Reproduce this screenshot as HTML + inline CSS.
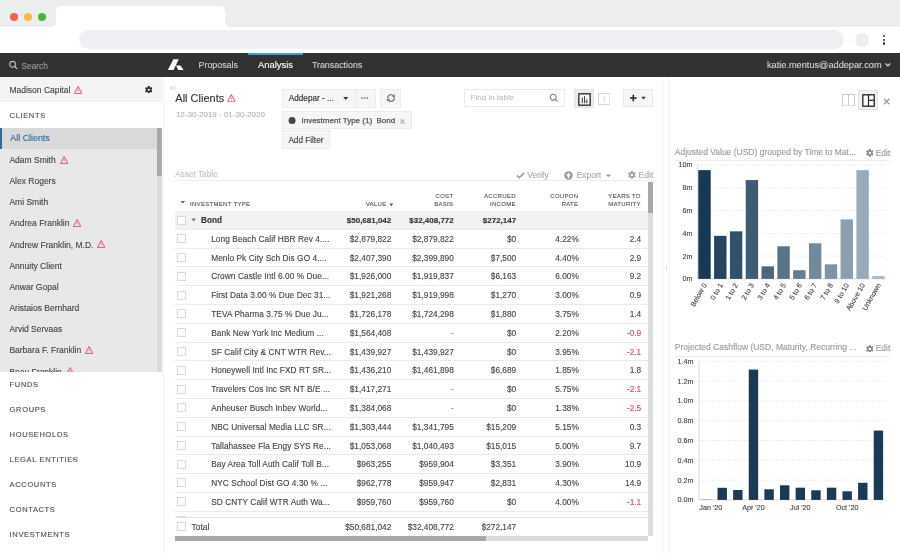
<!DOCTYPE html>
<html><head><meta charset="utf-8"><style>
html,body{margin:0;padding:0;width:900px;height:553px;overflow:hidden;background:#fff;}
body{position:relative;font-family:"Liberation Sans", sans-serif;}
div{position:absolute;}
.t{white-space:nowrap;-webkit-text-stroke-width:0.12px;}
#root{left:0;top:0;width:900px;height:553px;overflow:hidden;will-change:transform;background:#fff;}
svg{position:absolute;}
</style></head><body><div id="root">
<div style="left:0.00px;top:0.00px;width:900.00px;height:5.50px;background:#eceeed;"></div>
<div style="left:0.00px;top:0.00px;width:56.00px;height:27.00px;background:#eceeed;border-bottom-right-radius:5px;"></div>
<div style="left:225.00px;top:0.00px;width:675.00px;height:27.00px;background:#eceeed;border-bottom-left-radius:5px;"></div>
<div style="left:56.00px;top:5.00px;width:169.00px;height:7.00px;background:#eceeed;"></div>
<div style="left:56.00px;top:5.50px;width:169.00px;height:22.00px;background:#fff;border-radius:5px 5px 0 0;"></div>
<div style="left:9.90px;top:12.60px;width:8.20px;height:8.20px;background:#f95f57;border-radius:50%;"></div>
<div style="left:24.00px;top:12.60px;width:8.20px;height:8.20px;background:#f9bd3c;border-radius:50%;"></div>
<div style="left:38.10px;top:12.60px;width:8.20px;height:8.20px;background:#44b93c;border-radius:50%;"></div>
<div style="left:79.00px;top:30.20px;width:764.50px;height:19.10px;background:#eff0f3;border-radius:9.5px;"></div>
<div style="left:854.70px;top:32.50px;width:14.20px;height:14.20px;background:#eceef1;border-radius:50%;"></div>
<div style="left:883.30px;top:35.20px;width:2.20px;height:2.20px;background:#333;border-radius:50%;"></div>
<div style="left:883.30px;top:38.80px;width:2.20px;height:2.20px;background:#333;border-radius:50%;"></div>
<div style="left:883.30px;top:42.40px;width:2.20px;height:2.20px;background:#333;border-radius:50%;"></div>
<div style="left:0.00px;top:52.80px;width:900.00px;height:24.30px;background:#323232;"></div>
<div style="left:248.40px;top:52.80px;width:54.20px;height:1.80px;background:#3b9cec;"></div>
<svg style="position:absolute;left:8px;top:59px" width="12" height="12" viewBox="0 0 12 12"><circle cx="4.6" cy="5.3" r="2.9" fill="none" stroke="#bbb" stroke-width="1.1"/><line x1="6.8" y1="7.5" x2="8.8" y2="9.5" stroke="#bbb" stroke-width="1.2" stroke-linecap="round"/></svg>
<div class="t" style="top:61.77px;font-size:8.3px;line-height:8.3px;color:#9a9a9a;left:21.50px;">Search</div>
<svg style="position:absolute;left:0;top:0" width="200" height="80"><polygon points="167.9,70.1 173.3,59.2 178.7,59.2 173.6,70.1" fill="#fff"/><polygon points="176,65.5 180.4,65.5 183.6,70.1 178.2,70.1" fill="#fff"/></svg>
<div class="t" style="top:60.67px;font-size:8.9px;line-height:8.9px;color:#cfcfcf;left:198.50px;">Proposals</div>
<div class="t" style="top:60.24px;font-size:9.4px;line-height:9.4px;color:#ffffff;left:258.00px;">Analysis</div>
<div class="t" style="top:60.67px;font-size:8.9px;line-height:8.9px;color:#cfcfcf;left:311.90px;">Transactions</div>
<div class="t" style="top:60.51px;font-size:9.2px;line-height:9.2px;color:#d5d5d5;left:767.00px;">katie.mentus@addepar.com</div>
<svg style="position:absolute;left:884px;top:62px" width="8" height="6"><polyline points="1.5,1.5 3.9,4 6.3,1.5" fill="none" stroke="#ddd" stroke-width="1.1"/></svg>
<div style="left:0.00px;top:77.00px;width:162.00px;height:25.40px;background:#f4f4f4;"></div>
<div class="t" style="top:86.00px;font-size:8.5px;line-height:8.5px;color:#444;left:9.40px;">Madison Capital<svg style="position:static;display:inline-block;vertical-align:-1px;margin-top:-9px;margin-left:3.9px" width="8.20" height="8.20" viewBox="0 0 10 10"><path d="M5 0.7 L9.45 9.15 L0.55 9.15 Z" fill="none" stroke="#e46a80" stroke-width="1.28" stroke-linejoin="round"/><line x1="5" y1="3.9" x2="5" y2="6.3" stroke="#e46a80" stroke-width="0.95"/><circle cx="5" cy="7.5" r="0.5" fill="#e46a80"/></svg></div>
<svg style="position:absolute;left:144.50px;top:85.60px" width="7.60" height="7.60" viewBox="-10 -10 20 20"><g fill="#2a2a2a"><rect x="-2.6" y="-10" width="5.2" height="6" transform="rotate(0)"/><rect x="-2.6" y="-10" width="5.2" height="6" transform="rotate(60)"/><rect x="-2.6" y="-10" width="5.2" height="6" transform="rotate(120)"/><rect x="-2.6" y="-10" width="5.2" height="6" transform="rotate(180)"/><rect x="-2.6" y="-10" width="5.2" height="6" transform="rotate(240)"/><rect x="-2.6" y="-10" width="5.2" height="6" transform="rotate(300)"/><circle r="6.6"/></g><circle r="3" fill="#f4f4f4"/></svg>
<div style="left:0.00px;top:102.40px;width:162.00px;height:25.60px;background:#fff;"></div>
<div class="t" style="top:112.15px;font-size:7.5px;line-height:7.5px;color:#555;letter-spacing:0.65px;left:9.60px;-webkit-text-stroke:0.15px #555;">CLIENTS</div>
<div style="left:0.00px;top:128.00px;width:162.00px;height:244.00px;background:#e8e8e8;overflow:hidden;"></div>
<div style="left:0.00px;top:128.00px;width:157.00px;height:21.20px;background:#d9d9d9;"></div>
<div style="left:0.00px;top:128.00px;width:1.60px;height:21.20px;background:#2b6ba3;"></div>
<div style="left:157.20px;top:128.00px;width:5.00px;height:244.00px;background:#dcdcdc;"></div>
<div style="left:157.20px;top:128.00px;width:5.00px;height:47.80px;background:#a9a9a9;"></div>
<div class="t" style="top:134.42px;font-size:8.9px;line-height:8.9px;color:#2b6ba3;left:10.30px;">All Clients</div>
<div class="t" style="top:155.92px;font-size:8.5px;line-height:8.5px;color:#444;left:9.40px;">Adam Smith<svg style="position:static;display:inline-block;vertical-align:-1px;margin-top:-9px;margin-left:3.9px" width="8.20" height="8.20" viewBox="0 0 10 10"><path d="M5 0.7 L9.45 9.15 L0.55 9.15 Z" fill="none" stroke="#e46a80" stroke-width="1.28" stroke-linejoin="round"/><line x1="5" y1="3.9" x2="5" y2="6.3" stroke="#e46a80" stroke-width="0.95"/><circle cx="5" cy="7.5" r="0.5" fill="#e46a80"/></svg></div>
<div class="t" style="top:177.09px;font-size:8.5px;line-height:8.5px;color:#444;left:9.40px;">Alex Rogers</div>
<div class="t" style="top:198.26px;font-size:8.5px;line-height:8.5px;color:#444;left:9.40px;">Ami Smith</div>
<div class="t" style="top:219.43px;font-size:8.5px;line-height:8.5px;color:#444;left:9.40px;">Andrea Franklin<svg style="position:static;display:inline-block;vertical-align:-1px;margin-top:-9px;margin-left:3.9px" width="8.20" height="8.20" viewBox="0 0 10 10"><path d="M5 0.7 L9.45 9.15 L0.55 9.15 Z" fill="none" stroke="#e46a80" stroke-width="1.28" stroke-linejoin="round"/><line x1="5" y1="3.9" x2="5" y2="6.3" stroke="#e46a80" stroke-width="0.95"/><circle cx="5" cy="7.5" r="0.5" fill="#e46a80"/></svg></div>
<div class="t" style="top:240.60px;font-size:8.5px;line-height:8.5px;color:#444;left:9.40px;">Andrew Franklin, M.D.<svg style="position:static;display:inline-block;vertical-align:-1px;margin-top:-9px;margin-left:3.9px" width="8.20" height="8.20" viewBox="0 0 10 10"><path d="M5 0.7 L9.45 9.15 L0.55 9.15 Z" fill="none" stroke="#e46a80" stroke-width="1.28" stroke-linejoin="round"/><line x1="5" y1="3.9" x2="5" y2="6.3" stroke="#e46a80" stroke-width="0.95"/><circle cx="5" cy="7.5" r="0.5" fill="#e46a80"/></svg></div>
<div class="t" style="top:261.77px;font-size:8.5px;line-height:8.5px;color:#444;left:9.40px;">Annuity Client</div>
<div class="t" style="top:282.94px;font-size:8.5px;line-height:8.5px;color:#444;left:9.40px;">Anwar Gopal</div>
<div class="t" style="top:304.11px;font-size:8.5px;line-height:8.5px;color:#444;left:9.40px;">Aristaios Bernhard</div>
<div class="t" style="top:325.28px;font-size:8.5px;line-height:8.5px;color:#444;left:9.40px;">Arvid Servaas</div>
<div class="t" style="top:346.45px;font-size:8.5px;line-height:8.5px;color:#444;left:9.40px;">Barbara F. Franklin<svg style="position:static;display:inline-block;vertical-align:-1px;margin-top:-9px;margin-left:3.9px" width="8.20" height="8.20" viewBox="0 0 10 10"><path d="M5 0.7 L9.45 9.15 L0.55 9.15 Z" fill="none" stroke="#e46a80" stroke-width="1.28" stroke-linejoin="round"/><line x1="5" y1="3.9" x2="5" y2="6.3" stroke="#e46a80" stroke-width="0.95"/><circle cx="5" cy="7.5" r="0.5" fill="#e46a80"/></svg></div>
<div class="t" style="top:367.62px;font-size:8.5px;line-height:8.5px;color:#444;left:9.40px;">Beau Franklin<svg style="position:static;display:inline-block;vertical-align:-1px;margin-top:-9px;margin-left:3.9px" width="8.20" height="8.20" viewBox="0 0 10 10"><path d="M5 0.7 L9.45 9.15 L0.55 9.15 Z" fill="none" stroke="#e46a80" stroke-width="1.28" stroke-linejoin="round"/><line x1="5" y1="3.9" x2="5" y2="6.3" stroke="#e46a80" stroke-width="0.95"/><circle cx="5" cy="7.5" r="0.5" fill="#e46a80"/></svg></div>
<div style="left:0.00px;top:372.00px;width:162.00px;height:181.00px;background:#fff;"></div>
<div class="t" style="top:380.95px;font-size:7.5px;line-height:7.5px;color:#555;letter-spacing:0.65px;left:9.60px;-webkit-text-stroke:0.15px #555;">FUNDS</div>
<div class="t" style="top:406.00px;font-size:7.5px;line-height:7.5px;color:#555;letter-spacing:0.65px;left:9.60px;-webkit-text-stroke:0.15px #555;">GROUPS</div>
<div class="t" style="top:431.05px;font-size:7.5px;line-height:7.5px;color:#555;letter-spacing:0.65px;left:9.60px;-webkit-text-stroke:0.15px #555;">HOUSEHOLDS</div>
<div class="t" style="top:456.10px;font-size:7.5px;line-height:7.5px;color:#555;letter-spacing:0.65px;left:9.60px;-webkit-text-stroke:0.15px #555;">LEGAL ENTITIES</div>
<div class="t" style="top:481.15px;font-size:7.5px;line-height:7.5px;color:#555;letter-spacing:0.65px;left:9.60px;-webkit-text-stroke:0.15px #555;">ACCOUNTS</div>
<div class="t" style="top:506.20px;font-size:7.5px;line-height:7.5px;color:#555;letter-spacing:0.65px;left:9.60px;-webkit-text-stroke:0.15px #555;">CONTACTS</div>
<div class="t" style="top:531.25px;font-size:7.5px;line-height:7.5px;color:#555;letter-spacing:0.65px;left:9.60px;-webkit-text-stroke:0.15px #555;">INVESTMENTS</div>
<div style="left:162.50px;top:77.00px;width:0.80px;height:476.00px;background:#f3f3f3;"></div>
<svg style="position:absolute;left:168.5px;top:84.5px" width="8" height="6" viewBox="0 0 8 6"><polyline points="3.6,1 1.4,3 3.6,5" fill="none" stroke="#c4c4c4" stroke-width="0.9"/><polyline points="6.6,1 4.4,3 6.6,5" fill="none" stroke="#c4c4c4" stroke-width="0.9"/></svg>
<div class="t" style="top:93.39px;font-size:11px;line-height:11px;color:#333;left:175.30px;">All Clients</div>
<div style="left:226.90px;top:93.60px;line-height:0"><svg style="position:static;display:inline-block;display:block" width="8.60" height="8.60" viewBox="0 0 10 10"><path d="M5 0.7 L9.45 9.15 L0.55 9.15 Z" fill="none" stroke="#e46a80" stroke-width="1.22" stroke-linejoin="round"/><line x1="5" y1="3.9" x2="5" y2="6.3" stroke="#e46a80" stroke-width="0.95"/><circle cx="5" cy="7.5" r="0.5" fill="#e46a80"/></svg></div>
<div class="t" style="top:111.23px;font-size:8px;line-height:8px;color:#b5b5b5;left:175.90px;">12-30-2019 - 01-30-2020</div>
<div style="left:282.00px;top:89.00px;width:93.80px;height:18.50px;background:#f6f6f6;border:1px solid #ececec;box-sizing:border-box;"></div>
<div style="left:354.50px;top:89.00px;width:1.00px;height:18.50px;background:#e9e9e9;"></div>
<div class="t" style="top:94.76px;font-size:8.2px;line-height:8.2px;color:#3c3c3c;left:288.80px;-webkit-text-stroke:0.2px #3c3c3c;">Addepar - ...</div>
<svg style="position:absolute;left:342px;top:96px" width="8" height="5"><polygon points="1.2,1 6.2,1 3.7,4" fill="#333"/></svg>
<svg style="position:absolute;left:358px;top:95px" width="14" height="6"><circle cx="4.1" cy="3" r="0.85" fill="#666"/><circle cx="6.7" cy="3" r="0.85" fill="#666"/><circle cx="9.3" cy="3" r="0.85" fill="#666"/></svg>
<div style="left:380.20px;top:89.00px;width:20.60px;height:18.50px;background:#f6f6f6;border:1px solid #ececec;box-sizing:border-box;"></div>
<svg style="position:absolute;left:386px;top:92.8px" width="10" height="10" viewBox="0 0 10 10"><path d="M1.7 5.3 A3.3 3.3 0 0 1 7.6 3.0" fill="none" stroke="#808080" stroke-width="1.25"/><path d="M8.3 4.7 A3.3 3.3 0 0 1 2.4 7.0" fill="none" stroke="#777" stroke-width="1.25"/><polygon points="8.9,1.4 9.0,4.6 5.9,4.1" fill="#777"/><polygon points="1.1,8.6 1.0,5.4 4.1,5.9" fill="#777"/></svg>
<div style="left:281.60px;top:111.40px;width:130.30px;height:17.60px;background:#f6f6f6;border:1px solid #ebebeb;box-sizing:border-box;"></div>
<svg style="position:absolute;left:286px;top:114px" width="12" height="12"><circle cx="6.1" cy="6.4" r="3.5" fill="#444"/></svg>
<div class="t" style="top:116.53px;font-size:8px;line-height:8px;color:#555;left:301.50px;-webkit-text-stroke:0.25px #555;">Investment Type (1)</div>
<div class="t" style="top:116.53px;font-size:8px;line-height:8px;color:#555;left:376.40px;-webkit-text-stroke:0.25px #555;">Bond</div>
<svg style="position:absolute;left:399px;top:117.5px" width="7" height="7"><path d="M1.4 1.4 L5.6 5.6 M5.6 1.4 L1.4 5.6" stroke="#b0b0b0" stroke-width="1.2"/></svg>
<div style="left:281.60px;top:129.80px;width:48.20px;height:19.40px;background:#f6f6f6;border:1px solid #ebebeb;box-sizing:border-box;"></div>
<div class="t" style="top:136.66px;font-size:8.2px;line-height:8.2px;color:#444;left:288.40px;-webkit-text-stroke:0.15px #444;">Add Filter</div>
<div style="left:463.50px;top:89.20px;width:101.10px;height:17.90px;background:#fff;border:1px solid #ebebeb;box-sizing:border-box;"></div>
<div class="t" style="top:93.83px;font-size:8px;line-height:8px;color:#bdbdbd;left:470.60px;">Find in table</div>
<svg style="position:absolute;left:549px;top:92.5px" width="10" height="10" viewBox="0 0 10 10"><circle cx="4.2" cy="4.2" r="2.9" fill="none" stroke="#888" stroke-width="1.1"/><line x1="6.3" y1="6.3" x2="8.6" y2="8.6" stroke="#888" stroke-width="1.3"/></svg>
<div style="left:574.40px;top:88.90px;width:19.80px;height:19.60px;background:#ececec;border:1px solid #e2e2e2;box-sizing:border-box;"></div>
<svg style="position:absolute;left:578px;top:92.5px" width="13" height="13" viewBox="0 0 13 13"><rect x="0.8" y="0.8" width="11.4" height="11.4" fill="#f7f7f7" stroke="#333" stroke-width="1.4"/><rect x="3.8" y="4.6" width="1.1" height="5.6" fill="#444"/><rect x="6" y="3.2" width="1.1" height="7" fill="#444"/><rect x="8.2" y="6.6" width="1.1" height="3.6" fill="#444"/></svg>
<svg style="position:absolute;left:597.5px;top:92.8px" width="12.5" height="12" viewBox="0 0 12.5 12"><rect x="0.5" y="0.5" width="11.5" height="11" fill="#fff" stroke="#d4d4d4" stroke-width="1"/><line x1="6.2" y1="2.8" x2="6.2" y2="9.4" stroke="#ccc" stroke-width="0.8"/></svg>
<div style="left:623.30px;top:89.10px;width:29.90px;height:18.40px;background:#f6f6f6;border:1px solid #e8e8e8;box-sizing:border-box;"></div>
<svg style="position:absolute;left:629.2px;top:94px" width="18" height="8"><path d="M4.3 0.7 V7.3 M1.0 4 H7.6" stroke="#222" stroke-width="1.5"/><polygon points="12.3,2.8 16.7,2.8 14.5,5.4" fill="#333"/></svg>
<div class="t" style="top:170.27px;font-size:8.3px;line-height:8.3px;color:#c4c4c4;left:175.00px;">Asset Table</div>
<svg style="position:absolute;left:516px;top:172px" width="9" height="7"><polyline points="0.9,3.4 3.2,5.7 8.2,0.9" fill="none" stroke="#999" stroke-width="1.5"/></svg>
<div class="t" style="top:171.02px;font-size:8.6px;line-height:8.6px;color:#aaaaaa;left:527.20px;">Verify</div>
<svg style="position:absolute;left:564px;top:170.8px" width="9" height="9" viewBox="0 0 9 9"><circle cx="4.5" cy="4.5" r="4.2" fill="#999"/><polygon points="4.5,1.7 7.1,4.4 5.4,4.4 5.4,7.2 3.6,7.2 3.6,4.4 1.9,4.4" fill="#fff"/></svg>
<div class="t" style="top:171.02px;font-size:8.6px;line-height:8.6px;color:#aaaaaa;left:576.40px;">Export</div>
<svg style="position:absolute;left:605.3px;top:173.8px" width="7" height="4"><polygon points="0.4,0.6 6.4,0.6 3.4,3" fill="#999"/></svg>
<svg style="position:absolute;left:628.20px;top:170.80px" width="7.80" height="7.80" viewBox="-10 -10 20 20"><g fill="#a0a0a0"><rect x="-2.6" y="-10" width="5.2" height="6" transform="rotate(0)"/><rect x="-2.6" y="-10" width="5.2" height="6" transform="rotate(60)"/><rect x="-2.6" y="-10" width="5.2" height="6" transform="rotate(120)"/><rect x="-2.6" y="-10" width="5.2" height="6" transform="rotate(180)"/><rect x="-2.6" y="-10" width="5.2" height="6" transform="rotate(240)"/><rect x="-2.6" y="-10" width="5.2" height="6" transform="rotate(300)"/><circle r="6.6"/></g><circle r="3" fill="#fff"/></svg>
<div class="t" style="top:171.02px;font-size:8.6px;line-height:8.6px;color:#aaaaaa;left:638.60px;">Edit</div>
<div style="left:175.00px;top:180.20px;width:478.00px;height:0.90px;background:#ededed;"></div>
<svg style="position:absolute;left:179.5px;top:200px" width="6" height="5"><polygon points="0.6,1 5.2,1 2.9,3.6" fill="#666"/></svg>
<div class="t" style="top:201.32px;font-size:6px;line-height:6px;color:#555;letter-spacing:0.3px;left:190.00px;">INVESTMENT TYPE</div>
<div class="t" style="top:201.32px;font-size:6px;line-height:6px;color:#555;letter-spacing:0.3px;left:386.50px;transform:translateX(-100%);">VALUE</div>
<svg style="position:absolute;left:389px;top:202.6px" width="5" height="4"><polygon points="0.3,0.6 4.3,0.6 2.3,3.2" fill="#555"/></svg>
<div class="t" style="top:193.42px;font-size:6px;line-height:6px;color:#555;letter-spacing:0.3px;left:453.40px;transform:translateX(-100%);">COST</div>
<div class="t" style="top:201.32px;font-size:6px;line-height:6px;color:#555;letter-spacing:0.3px;left:453.40px;transform:translateX(-100%);">BASIS</div>
<div class="t" style="top:193.42px;font-size:6px;line-height:6px;color:#555;letter-spacing:0.3px;left:515.80px;transform:translateX(-100%);">ACCRUED</div>
<div class="t" style="top:201.32px;font-size:6px;line-height:6px;color:#555;letter-spacing:0.3px;left:515.80px;transform:translateX(-100%);">INCOME</div>
<div class="t" style="top:193.42px;font-size:6px;line-height:6px;color:#555;letter-spacing:0.3px;left:578.40px;transform:translateX(-100%);">COUPON</div>
<div class="t" style="top:201.32px;font-size:6px;line-height:6px;color:#555;letter-spacing:0.3px;left:578.40px;transform:translateX(-100%);">RATE</div>
<div class="t" style="top:193.42px;font-size:6px;line-height:6px;color:#555;letter-spacing:0.3px;left:640.80px;transform:translateX(-100%);">YEARS TO</div>
<div class="t" style="top:201.32px;font-size:6px;line-height:6px;color:#555;letter-spacing:0.3px;left:640.80px;transform:translateX(-100%);">MATURITY</div>
<div style="left:174.7px;top:210.6px;width:473.3px;height:306.8px;overflow:hidden">
<div style="left:0.00px;top:0.00px;width:473.30px;height:18.79px;background:#f2f2f2;"></div>
<div style="left:0.00px;top:18.29px;width:473.30px;height:0.80px;background:#ebebeb;"></div>
<div style="left:0.00px;top:37.08px;width:473.30px;height:0.80px;background:#ebebeb;"></div>
<div style="left:0.00px;top:55.87px;width:473.30px;height:0.80px;background:#ebebeb;"></div>
<div style="left:0.00px;top:74.66px;width:473.30px;height:0.80px;background:#ebebeb;"></div>
<div style="left:0.00px;top:93.45px;width:473.30px;height:0.80px;background:#ebebeb;"></div>
<div style="left:0.00px;top:112.24px;width:473.30px;height:0.80px;background:#ebebeb;"></div>
<div style="left:0.00px;top:131.03px;width:473.30px;height:0.80px;background:#ebebeb;"></div>
<div style="left:0.00px;top:149.82px;width:473.30px;height:0.80px;background:#ebebeb;"></div>
<div style="left:0.00px;top:168.61px;width:473.30px;height:0.80px;background:#ebebeb;"></div>
<div style="left:0.00px;top:187.40px;width:473.30px;height:0.80px;background:#ebebeb;"></div>
<div style="left:0.00px;top:206.19px;width:473.30px;height:0.80px;background:#ebebeb;"></div>
<div style="left:0.00px;top:224.98px;width:473.30px;height:0.80px;background:#ebebeb;"></div>
<div style="left:0.00px;top:243.77px;width:473.30px;height:0.80px;background:#ebebeb;"></div>
<div style="left:0.00px;top:262.56px;width:473.30px;height:0.80px;background:#ebebeb;"></div>
<div style="left:0.00px;top:281.35px;width:473.30px;height:0.80px;background:#ebebeb;"></div>
<div style="left:0.00px;top:300.14px;width:473.30px;height:0.80px;background:#ebebeb;"></div>
<div style="left:0.00px;top:318.93px;width:473.30px;height:0.80px;background:#ebebeb;"></div>
<div style="left:2.60px;top:5.40px;width:9.20px;height:9.00px;background:#fff;border:1px solid #d9d9d9;box-sizing:border-box;"></div>
<svg style="position:absolute;left:16.30px;top:7.70px" width="6" height="5"><polygon points="0.5,0.6 4.9,0.6 2.7,3.4" fill="#777"/></svg>
<div class="t" style="top:6.06px;font-size:8.2px;line-height:8.2px;color:#333;font-weight:700;left:26.30px;">Bond</div>
<div class="t" style="top:6.23px;font-size:8px;line-height:8px;color:#333;font-weight:700;left:216.60px;transform:translateX(-100%);">$50,681,042</div>
<div class="t" style="top:6.23px;font-size:8px;line-height:8px;color:#333;font-weight:700;left:279.10px;transform:translateX(-100%);">$32,408,772</div>
<div class="t" style="top:6.23px;font-size:8px;line-height:8px;color:#333;font-weight:700;left:341.50px;transform:translateX(-100%);">$272,147</div>
<div style="left:2.60px;top:23.59px;width:9.20px;height:9.00px;background:#fff;border:1px solid #d9d9d9;box-sizing:border-box;"></div>
<div class="t" style="left:36.50px;top:24.26px;font-size:8.3px;line-height:8.3px;color:#444;white-space:nowrap;letter-spacing:0.07px">Long Beach Calif HBR Rev 4....</div>
<div class="t" style="top:24.26px;font-size:8.3px;line-height:8.3px;color:#444;left:216.60px;transform:translateX(-100%);">$2,879,822</div>
<div class="t" style="top:24.26px;font-size:8.3px;line-height:8.3px;color:#444;left:279.10px;transform:translateX(-100%);">$2,879,822</div>
<div class="t" style="top:24.26px;font-size:8.3px;line-height:8.3px;color:#444;left:341.50px;transform:translateX(-100%);">$0</div>
<div class="t" style="top:24.26px;font-size:8.3px;line-height:8.3px;color:#444;left:404.10px;transform:translateX(-100%);">4.22%</div>
<div class="t" style="top:24.26px;font-size:8.3px;line-height:8.3px;color:#444;left:466.50px;transform:translateX(-100%);">2.4</div>
<div style="left:2.60px;top:42.38px;width:9.20px;height:9.00px;background:#fff;border:1px solid #d9d9d9;box-sizing:border-box;"></div>
<div class="t" style="left:36.50px;top:43.05px;font-size:8.3px;line-height:8.3px;color:#444;white-space:nowrap;letter-spacing:0.07px">Menlo Pk City Sch Dis GO 4....</div>
<div class="t" style="top:43.05px;font-size:8.3px;line-height:8.3px;color:#444;left:216.60px;transform:translateX(-100%);">$2,407,390</div>
<div class="t" style="top:43.05px;font-size:8.3px;line-height:8.3px;color:#444;left:279.10px;transform:translateX(-100%);">$2,399,890</div>
<div class="t" style="top:43.05px;font-size:8.3px;line-height:8.3px;color:#444;left:341.50px;transform:translateX(-100%);">$7,500</div>
<div class="t" style="top:43.05px;font-size:8.3px;line-height:8.3px;color:#444;left:404.10px;transform:translateX(-100%);">4.40%</div>
<div class="t" style="top:43.05px;font-size:8.3px;line-height:8.3px;color:#444;left:466.50px;transform:translateX(-100%);">2.9</div>
<div style="left:2.60px;top:61.17px;width:9.20px;height:9.00px;background:#fff;border:1px solid #d9d9d9;box-sizing:border-box;"></div>
<div class="t" style="left:36.50px;top:61.84px;font-size:8.3px;line-height:8.3px;color:#444;white-space:nowrap;letter-spacing:0.07px">Crown Castle Intl 6.00 % Due...</div>
<div class="t" style="top:61.84px;font-size:8.3px;line-height:8.3px;color:#444;left:216.60px;transform:translateX(-100%);">$1,926,000</div>
<div class="t" style="top:61.84px;font-size:8.3px;line-height:8.3px;color:#444;left:279.10px;transform:translateX(-100%);">$1,919,837</div>
<div class="t" style="top:61.84px;font-size:8.3px;line-height:8.3px;color:#444;left:341.50px;transform:translateX(-100%);">$6,163</div>
<div class="t" style="top:61.84px;font-size:8.3px;line-height:8.3px;color:#444;left:404.10px;transform:translateX(-100%);">6.00%</div>
<div class="t" style="top:61.84px;font-size:8.3px;line-height:8.3px;color:#444;left:466.50px;transform:translateX(-100%);">9.2</div>
<div style="left:2.60px;top:79.96px;width:9.20px;height:9.00px;background:#fff;border:1px solid #d9d9d9;box-sizing:border-box;"></div>
<div class="t" style="left:36.50px;top:80.63px;font-size:8.3px;line-height:8.3px;color:#444;white-space:nowrap;letter-spacing:0.07px">First Data 3.00 % Due Dec 31...</div>
<div class="t" style="top:80.63px;font-size:8.3px;line-height:8.3px;color:#444;left:216.60px;transform:translateX(-100%);">$1,921,268</div>
<div class="t" style="top:80.63px;font-size:8.3px;line-height:8.3px;color:#444;left:279.10px;transform:translateX(-100%);">$1,919,998</div>
<div class="t" style="top:80.63px;font-size:8.3px;line-height:8.3px;color:#444;left:341.50px;transform:translateX(-100%);">$1,270</div>
<div class="t" style="top:80.63px;font-size:8.3px;line-height:8.3px;color:#444;left:404.10px;transform:translateX(-100%);">3.00%</div>
<div class="t" style="top:80.63px;font-size:8.3px;line-height:8.3px;color:#444;left:466.50px;transform:translateX(-100%);">0.9</div>
<div style="left:2.60px;top:98.75px;width:9.20px;height:9.00px;background:#fff;border:1px solid #d9d9d9;box-sizing:border-box;"></div>
<div class="t" style="left:36.50px;top:99.42px;font-size:8.3px;line-height:8.3px;color:#444;white-space:nowrap;letter-spacing:0.07px">TEVA Pharma 3.75 % Due Ju...</div>
<div class="t" style="top:99.42px;font-size:8.3px;line-height:8.3px;color:#444;left:216.60px;transform:translateX(-100%);">$1,726,178</div>
<div class="t" style="top:99.42px;font-size:8.3px;line-height:8.3px;color:#444;left:279.10px;transform:translateX(-100%);">$1,724,298</div>
<div class="t" style="top:99.42px;font-size:8.3px;line-height:8.3px;color:#444;left:341.50px;transform:translateX(-100%);">$1,880</div>
<div class="t" style="top:99.42px;font-size:8.3px;line-height:8.3px;color:#444;left:404.10px;transform:translateX(-100%);">3.75%</div>
<div class="t" style="top:99.42px;font-size:8.3px;line-height:8.3px;color:#444;left:466.50px;transform:translateX(-100%);">1.4</div>
<div style="left:2.60px;top:117.54px;width:9.20px;height:9.00px;background:#fff;border:1px solid #d9d9d9;box-sizing:border-box;"></div>
<div class="t" style="left:36.50px;top:118.21px;font-size:8.3px;line-height:8.3px;color:#444;white-space:nowrap;letter-spacing:0.07px">Bank New York Inc Medium ...</div>
<div class="t" style="top:118.21px;font-size:8.3px;line-height:8.3px;color:#444;left:216.60px;transform:translateX(-100%);">$1,564,408</div>
<div class="t" style="top:118.21px;font-size:8.3px;line-height:8.3px;color:#999;left:279.10px;transform:translateX(-100%);">-</div>
<div class="t" style="top:118.21px;font-size:8.3px;line-height:8.3px;color:#444;left:341.50px;transform:translateX(-100%);">$0</div>
<div class="t" style="top:118.21px;font-size:8.3px;line-height:8.3px;color:#444;left:404.10px;transform:translateX(-100%);">2.20%</div>
<div class="t" style="top:118.21px;font-size:8.3px;line-height:8.3px;color:#dc4b57;left:466.50px;transform:translateX(-100%);">-0.9</div>
<div style="left:2.60px;top:136.33px;width:9.20px;height:9.00px;background:#fff;border:1px solid #d9d9d9;box-sizing:border-box;"></div>
<div class="t" style="left:36.50px;top:137.00px;font-size:8.3px;line-height:8.3px;color:#444;white-space:nowrap;letter-spacing:0.07px">SF Calif City &amp; CNT WTR Rev...</div>
<div class="t" style="top:137.00px;font-size:8.3px;line-height:8.3px;color:#444;left:216.60px;transform:translateX(-100%);">$1,439,927</div>
<div class="t" style="top:137.00px;font-size:8.3px;line-height:8.3px;color:#444;left:279.10px;transform:translateX(-100%);">$1,439,927</div>
<div class="t" style="top:137.00px;font-size:8.3px;line-height:8.3px;color:#444;left:341.50px;transform:translateX(-100%);">$0</div>
<div class="t" style="top:137.00px;font-size:8.3px;line-height:8.3px;color:#444;left:404.10px;transform:translateX(-100%);">3.95%</div>
<div class="t" style="top:137.00px;font-size:8.3px;line-height:8.3px;color:#dc4b57;left:466.50px;transform:translateX(-100%);">-2.1</div>
<div style="left:2.60px;top:155.12px;width:9.20px;height:9.00px;background:#fff;border:1px solid #d9d9d9;box-sizing:border-box;"></div>
<div class="t" style="left:36.50px;top:155.79px;font-size:8.3px;line-height:8.3px;color:#444;white-space:nowrap;letter-spacing:0.07px">Honeywell Intl Inc FXD RT SR...</div>
<div class="t" style="top:155.79px;font-size:8.3px;line-height:8.3px;color:#444;left:216.60px;transform:translateX(-100%);">$1,436,210</div>
<div class="t" style="top:155.79px;font-size:8.3px;line-height:8.3px;color:#444;left:279.10px;transform:translateX(-100%);">$1,461,898</div>
<div class="t" style="top:155.79px;font-size:8.3px;line-height:8.3px;color:#444;left:341.50px;transform:translateX(-100%);">$6,689</div>
<div class="t" style="top:155.79px;font-size:8.3px;line-height:8.3px;color:#444;left:404.10px;transform:translateX(-100%);">1.85%</div>
<div class="t" style="top:155.79px;font-size:8.3px;line-height:8.3px;color:#444;left:466.50px;transform:translateX(-100%);">1.8</div>
<div style="left:2.60px;top:173.91px;width:9.20px;height:9.00px;background:#fff;border:1px solid #d9d9d9;box-sizing:border-box;"></div>
<div class="t" style="left:36.50px;top:174.58px;font-size:8.3px;line-height:8.3px;color:#444;white-space:nowrap;letter-spacing:0.07px">Travelers Cos Inc SR NT B/E ...</div>
<div class="t" style="top:174.58px;font-size:8.3px;line-height:8.3px;color:#444;left:216.60px;transform:translateX(-100%);">$1,417,271</div>
<div class="t" style="top:174.58px;font-size:8.3px;line-height:8.3px;color:#999;left:279.10px;transform:translateX(-100%);">-</div>
<div class="t" style="top:174.58px;font-size:8.3px;line-height:8.3px;color:#444;left:341.50px;transform:translateX(-100%);">$0</div>
<div class="t" style="top:174.58px;font-size:8.3px;line-height:8.3px;color:#444;left:404.10px;transform:translateX(-100%);">5.75%</div>
<div class="t" style="top:174.58px;font-size:8.3px;line-height:8.3px;color:#dc4b57;left:466.50px;transform:translateX(-100%);">-2.1</div>
<div style="left:2.60px;top:192.70px;width:9.20px;height:9.00px;background:#fff;border:1px solid #d9d9d9;box-sizing:border-box;"></div>
<div class="t" style="left:36.50px;top:193.37px;font-size:8.3px;line-height:8.3px;color:#444;white-space:nowrap;letter-spacing:0.07px">Anheuser Busch Inbev World...</div>
<div class="t" style="top:193.37px;font-size:8.3px;line-height:8.3px;color:#444;left:216.60px;transform:translateX(-100%);">$1,384,068</div>
<div class="t" style="top:193.37px;font-size:8.3px;line-height:8.3px;color:#999;left:279.10px;transform:translateX(-100%);">-</div>
<div class="t" style="top:193.37px;font-size:8.3px;line-height:8.3px;color:#444;left:341.50px;transform:translateX(-100%);">$0</div>
<div class="t" style="top:193.37px;font-size:8.3px;line-height:8.3px;color:#444;left:404.10px;transform:translateX(-100%);">1.38%</div>
<div class="t" style="top:193.37px;font-size:8.3px;line-height:8.3px;color:#dc4b57;left:466.50px;transform:translateX(-100%);">-2.5</div>
<div style="left:2.60px;top:211.49px;width:9.20px;height:9.00px;background:#fff;border:1px solid #d9d9d9;box-sizing:border-box;"></div>
<div class="t" style="left:36.50px;top:212.16px;font-size:8.3px;line-height:8.3px;color:#444;white-space:nowrap;letter-spacing:0.07px">NBC Universal Media LLC SR...</div>
<div class="t" style="top:212.16px;font-size:8.3px;line-height:8.3px;color:#444;left:216.60px;transform:translateX(-100%);">$1,303,444</div>
<div class="t" style="top:212.16px;font-size:8.3px;line-height:8.3px;color:#444;left:279.10px;transform:translateX(-100%);">$1,341,795</div>
<div class="t" style="top:212.16px;font-size:8.3px;line-height:8.3px;color:#444;left:341.50px;transform:translateX(-100%);">$15,209</div>
<div class="t" style="top:212.16px;font-size:8.3px;line-height:8.3px;color:#444;left:404.10px;transform:translateX(-100%);">5.15%</div>
<div class="t" style="top:212.16px;font-size:8.3px;line-height:8.3px;color:#444;left:466.50px;transform:translateX(-100%);">0.3</div>
<div style="left:2.60px;top:230.28px;width:9.20px;height:9.00px;background:#fff;border:1px solid #d9d9d9;box-sizing:border-box;"></div>
<div class="t" style="left:36.50px;top:230.95px;font-size:8.3px;line-height:8.3px;color:#444;white-space:nowrap;letter-spacing:0.07px">Tallahassee Fla Engy SYS Re...</div>
<div class="t" style="top:230.95px;font-size:8.3px;line-height:8.3px;color:#444;left:216.60px;transform:translateX(-100%);">$1,053,068</div>
<div class="t" style="top:230.95px;font-size:8.3px;line-height:8.3px;color:#444;left:279.10px;transform:translateX(-100%);">$1,040,493</div>
<div class="t" style="top:230.95px;font-size:8.3px;line-height:8.3px;color:#444;left:341.50px;transform:translateX(-100%);">$15,015</div>
<div class="t" style="top:230.95px;font-size:8.3px;line-height:8.3px;color:#444;left:404.10px;transform:translateX(-100%);">5.00%</div>
<div class="t" style="top:230.95px;font-size:8.3px;line-height:8.3px;color:#444;left:466.50px;transform:translateX(-100%);">9.7</div>
<div style="left:2.60px;top:249.07px;width:9.20px;height:9.00px;background:#fff;border:1px solid #d9d9d9;box-sizing:border-box;"></div>
<div class="t" style="left:36.50px;top:249.74px;font-size:8.3px;line-height:8.3px;color:#444;white-space:nowrap;letter-spacing:0.07px">Bay Area Toll Auth Calif Toll B...</div>
<div class="t" style="top:249.74px;font-size:8.3px;line-height:8.3px;color:#444;left:216.60px;transform:translateX(-100%);">$963,255</div>
<div class="t" style="top:249.74px;font-size:8.3px;line-height:8.3px;color:#444;left:279.10px;transform:translateX(-100%);">$959,904</div>
<div class="t" style="top:249.74px;font-size:8.3px;line-height:8.3px;color:#444;left:341.50px;transform:translateX(-100%);">$3,351</div>
<div class="t" style="top:249.74px;font-size:8.3px;line-height:8.3px;color:#444;left:404.10px;transform:translateX(-100%);">3.90%</div>
<div class="t" style="top:249.74px;font-size:8.3px;line-height:8.3px;color:#444;left:466.50px;transform:translateX(-100%);">10.9</div>
<div style="left:2.60px;top:267.86px;width:9.20px;height:9.00px;background:#fff;border:1px solid #d9d9d9;box-sizing:border-box;"></div>
<div class="t" style="left:36.50px;top:268.53px;font-size:8.3px;line-height:8.3px;color:#444;white-space:nowrap;letter-spacing:0.07px">NYC School Dist GO 4.30 % ...</div>
<div class="t" style="top:268.53px;font-size:8.3px;line-height:8.3px;color:#444;left:216.60px;transform:translateX(-100%);">$962,778</div>
<div class="t" style="top:268.53px;font-size:8.3px;line-height:8.3px;color:#444;left:279.10px;transform:translateX(-100%);">$959,947</div>
<div class="t" style="top:268.53px;font-size:8.3px;line-height:8.3px;color:#444;left:341.50px;transform:translateX(-100%);">$2,831</div>
<div class="t" style="top:268.53px;font-size:8.3px;line-height:8.3px;color:#444;left:404.10px;transform:translateX(-100%);">4.30%</div>
<div class="t" style="top:268.53px;font-size:8.3px;line-height:8.3px;color:#444;left:466.50px;transform:translateX(-100%);">14.9</div>
<div style="left:2.60px;top:286.65px;width:9.20px;height:9.00px;background:#fff;border:1px solid #d9d9d9;box-sizing:border-box;"></div>
<div class="t" style="left:36.50px;top:287.32px;font-size:8.3px;line-height:8.3px;color:#444;white-space:nowrap;letter-spacing:0.07px">SD CNTY Calif WTR Auth Wa...</div>
<div class="t" style="top:287.32px;font-size:8.3px;line-height:8.3px;color:#444;left:216.60px;transform:translateX(-100%);">$959,760</div>
<div class="t" style="top:287.32px;font-size:8.3px;line-height:8.3px;color:#444;left:279.10px;transform:translateX(-100%);">$959,760</div>
<div class="t" style="top:287.32px;font-size:8.3px;line-height:8.3px;color:#444;left:341.50px;transform:translateX(-100%);">$0</div>
<div class="t" style="top:287.32px;font-size:8.3px;line-height:8.3px;color:#444;left:404.10px;transform:translateX(-100%);">4.00%</div>
<div class="t" style="top:287.32px;font-size:8.3px;line-height:8.3px;color:#dc4b57;left:466.50px;transform:translateX(-100%);">-1.1</div>
<div style="left:2.60px;top:305.44px;width:9.20px;height:9.00px;background:#fff;border:1px solid #d9d9d9;box-sizing:border-box;"></div>
</div>
<div style="left:174.70px;top:517.40px;width:473.30px;height:0.90px;background:#e2e2e2;"></div>
<div style="left:177.20px;top:522.30px;width:9.20px;height:9.00px;background:#fff;border:1px solid #d9d9d9;box-sizing:border-box;"></div>
<div class="t" style="top:522.89px;font-size:8.4px;line-height:8.4px;color:#444;left:191.60px;">Total</div>
<div class="t" style="top:522.87px;font-size:8.3px;line-height:8.3px;color:#444;left:391.30px;transform:translateX(-100%);">$50,681,042</div>
<div class="t" style="top:522.87px;font-size:8.3px;line-height:8.3px;color:#444;left:453.80px;transform:translateX(-100%);">$32,408,772</div>
<div class="t" style="top:522.87px;font-size:8.3px;line-height:8.3px;color:#444;left:516.20px;transform:translateX(-100%);">$272,147</div>
<div style="left:174.50px;top:536.10px;width:473.00px;height:4.80px;background:#dcdcdc;"></div>
<div style="left:174.50px;top:536.10px;width:311.30px;height:4.80px;background:#a8a8a8;"></div>
<div style="left:648.00px;top:182.20px;width:5.00px;height:353.50px;background:#dcdcdc;"></div>
<div style="left:648.00px;top:182.20px;width:5.00px;height:31.00px;background:#a8a8a8;"></div>
<div style="left:662.00px;top:77.00px;width:0.90px;height:476.00px;background:#f3f3f3;"></div>
<div style="left:669.00px;top:77.00px;width:0.90px;height:476.00px;background:#f3f3f3;"></div>
<div style="left:665.50px;top:264.50px;width:0.90px;height:6.50px;background:#e0e0e0;"></div>
<svg style="position:absolute;left:842px;top:93.8px" width="13" height="12.4" viewBox="0 0 13 12.4"><rect x="0.5" y="0.5" width="12" height="11.4" fill="none" stroke="#ccc" stroke-width="1"/><line x1="6.5" y1="0.5" x2="6.5" y2="12" stroke="#ccc" stroke-width="1"/></svg>
<div style="left:858.10px;top:90.00px;width:19.50px;height:20.00px;background:#f1f1f1;border:1px solid #e2e2e2;box-sizing:border-box;"></div>
<svg style="position:absolute;left:861.6px;top:93.6px" width="13" height="13" viewBox="0 0 13 13"><rect x="0.8" y="0.8" width="11.4" height="11.4" fill="#fafafa" stroke="#222" stroke-width="1.3"/><line x1="6.5" y1="0.9" x2="6.5" y2="12" stroke="#222" stroke-width="1.2"/><line x1="6.5" y1="6.3" x2="12" y2="6.3" stroke="#222" stroke-width="1.2"/></svg>
<svg style="position:absolute;left:883px;top:97.5px" width="7.5" height="7"><path d="M1 0.8 L6.4 6.2 M6.4 0.8 L1 6.2" stroke="#a0a0a0" stroke-width="1.3"/></svg>
<div class="t" style="top:147.60px;font-size:8.5px;line-height:8.5px;color:#9a9a9a;left:674.80px;">Adjusted Value (USD) grouped by Time to Mat...</div>
<svg style="position:absolute;left:865.70px;top:149.20px" width="7.80" height="7.80" viewBox="-10 -10 20 20"><g fill="#8a8a8a"><rect x="-2.6" y="-10" width="5.2" height="6" transform="rotate(0)"/><rect x="-2.6" y="-10" width="5.2" height="6" transform="rotate(60)"/><rect x="-2.6" y="-10" width="5.2" height="6" transform="rotate(120)"/><rect x="-2.6" y="-10" width="5.2" height="6" transform="rotate(180)"/><rect x="-2.6" y="-10" width="5.2" height="6" transform="rotate(240)"/><rect x="-2.6" y="-10" width="5.2" height="6" transform="rotate(300)"/><circle r="6.6"/></g><circle r="3" fill="#fff"/></svg>
<div class="t" style="top:148.90px;font-size:8.5px;line-height:8.5px;color:#9a9a9a;left:875.70px;">Edit</div>
<div style="left:675.00px;top:159.70px;width:215.00px;height:0.90px;background:#eeeeee;"></div>
<svg style="position:absolute;left:0;top:0" width="900" height="553"><line x1="698" y1="256.10" x2="886" y2="256.10" stroke="#e0e0e0" stroke-width="0.8" stroke-dasharray="1.6 1.6"/><line x1="698" y1="233.30" x2="886" y2="233.30" stroke="#e0e0e0" stroke-width="0.8" stroke-dasharray="1.6 1.6"/><line x1="698" y1="210.50" x2="886" y2="210.50" stroke="#e0e0e0" stroke-width="0.8" stroke-dasharray="1.6 1.6"/><line x1="698" y1="187.70" x2="886" y2="187.70" stroke="#e0e0e0" stroke-width="0.8" stroke-dasharray="1.6 1.6"/><line x1="698" y1="164.90" x2="886" y2="164.90" stroke="#e0e0e0" stroke-width="0.8" stroke-dasharray="1.6 1.6"/><line x1="697" y1="278.90" x2="886" y2="278.90" stroke="#dedede" stroke-width="1"/><line x1="697.5" y1="164.5" x2="697.5" y2="278.90" stroke="#e2e2e2" stroke-width="1"/><rect x="698.30" y="170.14" width="12.4" height="108.76" fill="rgb(23, 57, 85)"/><rect x="714.11" y="235.81" width="12.4" height="43.09" fill="rgb(36, 68, 95)"/><rect x="729.92" y="231.36" width="12.4" height="47.54" fill="rgb(49, 80, 105)"/><rect x="745.73" y="180.06" width="12.4" height="98.84" fill="rgb(62, 91, 115)"/><rect x="761.54" y="266.36" width="12.4" height="12.54" fill="rgb(75, 102, 125)"/><rect x="777.35" y="246.30" width="12.4" height="32.60" fill="rgb(88, 114, 135)"/><rect x="793.16" y="270.24" width="12.4" height="8.66" fill="rgb(101, 125, 144)"/><rect x="808.97" y="243.33" width="12.4" height="35.57" fill="rgb(114, 137, 154)"/><rect x="824.78" y="264.31" width="12.4" height="14.59" fill="rgb(127, 148, 164)"/><rect x="840.59" y="219.39" width="12.4" height="59.51" fill="rgb(140, 159, 174)"/><rect x="856.40" y="170.14" width="12.4" height="108.76" fill="rgb(153, 171, 184)"/><rect x="872.21" y="276.16" width="12.4" height="2.74" fill="rgb(166, 182, 194)"/></svg>
<div class="t" style="top:275.31px;font-size:7.2px;line-height:7.2px;color:#444;left:692.40px;transform:translateX(-100%);">0m</div>
<div class="t" style="top:252.51px;font-size:7.2px;line-height:7.2px;color:#444;left:692.40px;transform:translateX(-100%);">2m</div>
<div class="t" style="top:229.71px;font-size:7.2px;line-height:7.2px;color:#444;left:692.40px;transform:translateX(-100%);">4m</div>
<div class="t" style="top:206.91px;font-size:7.2px;line-height:7.2px;color:#444;left:692.40px;transform:translateX(-100%);">6m</div>
<div class="t" style="top:184.11px;font-size:7.2px;line-height:7.2px;color:#444;left:692.40px;transform:translateX(-100%);">8m</div>
<div class="t" style="top:161.31px;font-size:7.2px;line-height:7.2px;color:#444;left:692.40px;transform:translateX(-100%);">10m</div>
<div class="t" style="left:701.80px;top:282.10px;font-size:7.2px;line-height:7.2px;color:#444;transform:translateX(-100%) rotate(-60deg);transform-origin:100% 0;">Below 0</div>
<div class="t" style="left:717.61px;top:282.10px;font-size:7.2px;line-height:7.2px;color:#444;transform:translateX(-100%) rotate(-60deg);transform-origin:100% 0;">0 to 1</div>
<div class="t" style="left:733.42px;top:282.10px;font-size:7.2px;line-height:7.2px;color:#444;transform:translateX(-100%) rotate(-60deg);transform-origin:100% 0;">1 to 2</div>
<div class="t" style="left:749.23px;top:282.10px;font-size:7.2px;line-height:7.2px;color:#444;transform:translateX(-100%) rotate(-60deg);transform-origin:100% 0;">2 to 3</div>
<div class="t" style="left:765.04px;top:282.10px;font-size:7.2px;line-height:7.2px;color:#444;transform:translateX(-100%) rotate(-60deg);transform-origin:100% 0;">3 to 4</div>
<div class="t" style="left:780.85px;top:282.10px;font-size:7.2px;line-height:7.2px;color:#444;transform:translateX(-100%) rotate(-60deg);transform-origin:100% 0;">4 to 5</div>
<div class="t" style="left:796.66px;top:282.10px;font-size:7.2px;line-height:7.2px;color:#444;transform:translateX(-100%) rotate(-60deg);transform-origin:100% 0;">5 to 6</div>
<div class="t" style="left:812.47px;top:282.10px;font-size:7.2px;line-height:7.2px;color:#444;transform:translateX(-100%) rotate(-60deg);transform-origin:100% 0;">6 to 7</div>
<div class="t" style="left:828.28px;top:282.10px;font-size:7.2px;line-height:7.2px;color:#444;transform:translateX(-100%) rotate(-60deg);transform-origin:100% 0;">7 to 8</div>
<div class="t" style="left:844.09px;top:282.10px;font-size:7.2px;line-height:7.2px;color:#444;transform:translateX(-100%) rotate(-60deg);transform-origin:100% 0;">9 to 10</div>
<div class="t" style="left:859.90px;top:282.10px;font-size:7.2px;line-height:7.2px;color:#444;transform:translateX(-100%) rotate(-60deg);transform-origin:100% 0;">Above 10</div>
<div class="t" style="left:875.71px;top:282.10px;font-size:7.2px;line-height:7.2px;color:#444;transform:translateX(-100%) rotate(-60deg);transform-origin:100% 0;">Unknown</div>
<div class="t" style="top:343.00px;font-size:8.5px;line-height:8.5px;color:#9a9a9a;left:674.80px;">Projected Cashflow (USD, Maturity, Recurring ...</div>
<svg style="position:absolute;left:865.70px;top:344.60px" width="7.80" height="7.80" viewBox="-10 -10 20 20"><g fill="#8a8a8a"><rect x="-2.6" y="-10" width="5.2" height="6" transform="rotate(0)"/><rect x="-2.6" y="-10" width="5.2" height="6" transform="rotate(60)"/><rect x="-2.6" y="-10" width="5.2" height="6" transform="rotate(120)"/><rect x="-2.6" y="-10" width="5.2" height="6" transform="rotate(180)"/><rect x="-2.6" y="-10" width="5.2" height="6" transform="rotate(240)"/><rect x="-2.6" y="-10" width="5.2" height="6" transform="rotate(300)"/><circle r="6.6"/></g><circle r="3" fill="#fff"/></svg>
<div class="t" style="top:344.30px;font-size:8.5px;line-height:8.5px;color:#9a9a9a;left:875.70px;">Edit</div>
<div style="left:675.00px;top:355.60px;width:215.00px;height:0.90px;background:#eeeeee;"></div>
<svg style="position:absolute;left:0;top:0" width="900" height="553"><line x1="699" y1="480.10" x2="886" y2="480.10" stroke="#e0e0e0" stroke-width="0.8" stroke-dasharray="1.6 1.6"/><line x1="699" y1="460.30" x2="886" y2="460.30" stroke="#e0e0e0" stroke-width="0.8" stroke-dasharray="1.6 1.6"/><line x1="699" y1="440.50" x2="886" y2="440.50" stroke="#e0e0e0" stroke-width="0.8" stroke-dasharray="1.6 1.6"/><line x1="699" y1="420.70" x2="886" y2="420.70" stroke="#e0e0e0" stroke-width="0.8" stroke-dasharray="1.6 1.6"/><line x1="699" y1="400.90" x2="886" y2="400.90" stroke="#e0e0e0" stroke-width="0.8" stroke-dasharray="1.6 1.6"/><line x1="699" y1="381.10" x2="886" y2="381.10" stroke="#e0e0e0" stroke-width="0.8" stroke-dasharray="1.6 1.6"/><line x1="699" y1="361.30" x2="886" y2="361.30" stroke="#e0e0e0" stroke-width="0.8" stroke-dasharray="1.6 1.6"/><line x1="698.5" y1="499.90" x2="886" y2="499.90" stroke="#dedede" stroke-width="1"/><line x1="699" y1="360.5" x2="699" y2="499.90" stroke="#e2e2e2" stroke-width="1.3"/><rect x="701.90" y="499.20" width="9.4" height="0.70" fill="#9aa8b5"/><rect x="717.52" y="487.80" width="9.4" height="12.10" fill="#1a3a56"/><rect x="733.14" y="490.00" width="9.4" height="9.90" fill="#1a3a56"/><rect x="748.76" y="369.60" width="9.4" height="130.30" fill="#1a3a56"/><rect x="764.38" y="489.30" width="9.4" height="10.60" fill="#1a3a56"/><rect x="780.00" y="485.30" width="9.4" height="14.60" fill="#1a3a56"/><rect x="795.62" y="487.70" width="9.4" height="12.20" fill="#1a3a56"/><rect x="811.24" y="490.30" width="9.4" height="9.60" fill="#1a3a56"/><rect x="826.86" y="487.70" width="9.4" height="12.20" fill="#1a3a56"/><rect x="842.48" y="491.30" width="9.4" height="8.60" fill="#1a3a56"/><rect x="858.10" y="482.80" width="9.4" height="17.10" fill="#1a3a56"/><rect x="873.72" y="430.60" width="9.4" height="69.30" fill="#1a3a56"/></svg>
<div class="t" style="top:496.31px;font-size:7.2px;line-height:7.2px;color:#444;left:693.60px;transform:translateX(-100%);">0.0m</div>
<div class="t" style="top:476.51px;font-size:7.2px;line-height:7.2px;color:#444;left:693.60px;transform:translateX(-100%);">0.2m</div>
<div class="t" style="top:456.71px;font-size:7.2px;line-height:7.2px;color:#444;left:693.60px;transform:translateX(-100%);">0.4m</div>
<div class="t" style="top:436.91px;font-size:7.2px;line-height:7.2px;color:#444;left:693.60px;transform:translateX(-100%);">0.6m</div>
<div class="t" style="top:417.11px;font-size:7.2px;line-height:7.2px;color:#444;left:693.60px;transform:translateX(-100%);">0.8m</div>
<div class="t" style="top:397.31px;font-size:7.2px;line-height:7.2px;color:#444;left:693.60px;transform:translateX(-100%);">1.0m</div>
<div class="t" style="top:377.51px;font-size:7.2px;line-height:7.2px;color:#444;left:693.60px;transform:translateX(-100%);">1.2m</div>
<div class="t" style="top:357.71px;font-size:7.2px;line-height:7.2px;color:#444;left:693.60px;transform:translateX(-100%);">1.4m</div>
<div class="t" style="left:680.80px;width:60px;text-align:center;top:504.11px;font-size:7.2px;line-height:7.2px;color:#444;">Jan '20</div>
<div class="t" style="left:723.46px;width:60px;text-align:center;top:504.11px;font-size:7.2px;line-height:7.2px;color:#444;">Apr '20</div>
<div class="t" style="left:770.32px;width:60px;text-align:center;top:504.11px;font-size:7.2px;line-height:7.2px;color:#444;">Jul '20</div>
<div class="t" style="left:817.18px;width:60px;text-align:center;top:504.11px;font-size:7.2px;line-height:7.2px;color:#444;">Oct '20</div>
</div></body></html>
